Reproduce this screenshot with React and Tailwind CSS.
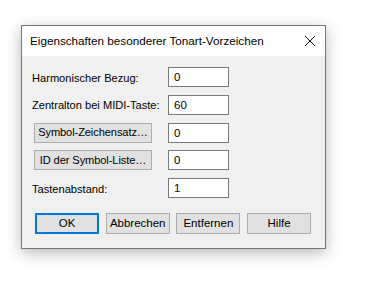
import React from 'react'

const font = { fontFamily: '"Segoe UI", "Liberation Sans", Arial, sans-serif' }

function Field({ value }){
  return (
    <div className="w-[61px] h-[20px] border border-[#7a7a7a] bg-white pl-[5px] text-[11.5px] leading-[18px] text-black">{value}</div>
  )
}

function SmallBtn({ children, primary }){
  return (
    <div className={`h-[21px] flex items-center justify-center bg-[#e1e1e1] text-[11.5px] text-black whitespace-nowrap ${primary ? 'border-2 border-[#0078d7]' : 'border border-[#adadad]'}`}>{children}</div>
  )
}

export default function App(){
  const rows = [
    { label: 'Harmonischer Bezug:', value: '0' },
    { label: 'Zentralton bei MIDI-Taste:', value: '60' },
    { label: 'Symbol-Zeichensatz…', value: '0', button: true },
    { label: 'ID der Symbol-Liste…', value: '0', button: true },
    { label: 'Tastenabstand:', value: '1' },
  ]

  return (
    <div className="w-[366px] h-[284px] bg-white pt-[25px] pl-[21px]" style={font}>
      <div className="w-[305px] h-[224px] border border-[#777] bg-[#f0f0f0] shadow-[0_4px_14px_rgba(0,0,0,0.28)] flex flex-col">
        {/* title bar */}
        <div className="h-[30px] bg-white flex items-center justify-between pl-[8px] pr-[9px]">
          <span className="text-[11.7px] text-black whitespace-nowrap">Eigenschaften besonderer Tonart-Vorzeichen</span>
          <svg width="12" height="12" viewBox="0 0 12 12" className="text-[#111]">
            <path d="M1 1 L11 11 M11 1 L1 11" stroke="currentColor" strokeWidth="1" />
          </svg>
        </div>

        <div className="flex flex-col gap-[7.75px] pt-[11px] pl-[10px]">
          {rows.map(r => (
            <div key={r.label} className="flex items-center">
              <div className="w-[136px] text-[11.1px] text-black whitespace-nowrap pt-[2px]">
                {r.button ? (
                  <div className="ml-[2px] -mt-[2px] w-[118px] h-[20px] border border-[#adadad] bg-[#e1e1e1] flex items-center justify-center tracking-[-0.1px]">{r.label}</div>
                ) : r.label}
              </div>
              <Field value={r.value} />
            </div>
          ))}
        </div>

        <div className="flex pl-[13px] pt-[15px] gap-[6.7px]">
          <div className="w-[64px]"><SmallBtn primary>OK</SmallBtn></div>
          <div className="w-[64px]"><SmallBtn>Abbrechen</SmallBtn></div>
          <div className="w-[64px]"><SmallBtn>Entfernen</SmallBtn></div>
          <div className="w-[64px]"><SmallBtn>Hilfe</SmallBtn></div>
        </div>
      </div>
    </div>
  )
}
